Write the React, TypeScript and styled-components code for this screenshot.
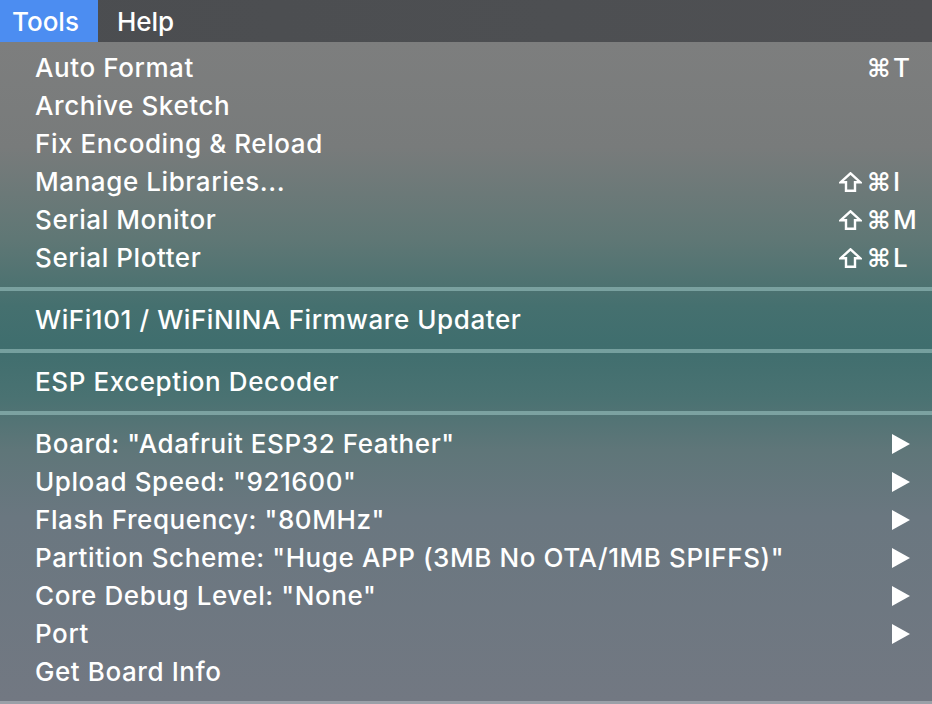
import React from "react";
import styled, { createGlobalStyle } from "styled-components";

const Global = createGlobalStyle`
  html, body { margin: 0; padding: 0; background: #6f7780; }
  body { width: 932px; height: 704px; overflow: hidden; font-family: Inter, "Noto Sans", "DejaVu Sans", sans-serif; }
  * { box-sizing: border-box; }
`;

const Screen = styled.div`
  width: 932px;
  height: 704px;
  display: flex;
  flex-direction: column;
  color: #fff;
`;

const MenuBar = styled.div`
  height: 42px;
  display: flex;
  align-items: stretch;
  background: linear-gradient(90deg, #4b4d50 0%, #4d4f52 60%, #4f5053 100%);
  font-size: 26px;
  font-weight: 500;
  letter-spacing: 0;
`;

const BarItem = styled.div<{ $active?: boolean }>`
  display: flex;
  align-items: center;
  padding: 0 19px;
  background: ${(p) => (p.$active ? "#4c8df1" : "transparent")};
  &:first-child {
    padding-left: 12px;
  }
`;

const Menu = styled.div`
  flex: 1;
  display: flex;
  flex-direction: column;
  padding: 7px 0 10px;
  background: linear-gradient(
    180deg,
    #7d7e7e 0%,
    #787b7b 16%,
    #5f7775 30%,
    #45706f 40%,
    #3f6e6e 46%,
    #4a7272 54%,
    #5f7679 62%,
    #6a7780 72%,
    #727882 100%
  );
  border-bottom: 3px solid #9aa0a8;
`;

const Row = styled.div`
  height: 38px;
  display: flex;
  align-items: center;
  padding: 0 13px 0 35px;
  font-size: 26px;
  font-weight: 500;
  letter-spacing: 0.58px;
  line-height: 36px;
`;

const Label = styled.span`
  flex: 1;
  white-space: nowrap;
`;

const Shortcut = styled.span`
  display: grid;
  grid-template-columns: 80px 26px;
  align-items: center;
`;

const Mods = styled.span`
  display: flex;
  justify-content: flex-end;
  align-items: center;
  gap: 5px;
  padding-right: 2px;
`;

const Cmd = styled.span`
  font-family: "DejaVu Sans", sans-serif;
  font-size: 25px;
  font-weight: 700;
  line-height: 1;
`;

const ShiftIcon = styled.svg`
  width: 23px;
  height: 20px;
`;

const Key = styled.span`
  text-align: left;
`;

const Separator = styled.div`
  height: 24px;
  display: flex;
  align-items: center;
  &::after {
    content: "";
    flex: 1;
    height: 4px;
    background: rgba(160, 200, 198, 0.55);
  }
`;

const Arrow = styled.svg`
  width: 18px;
  height: 20px;
  margin-right: 9px;
`;

type Item =
  | { type: "sep" }
  | { type: "item"; label: string; shift?: boolean; key?: string; sub?: boolean };

const items: Item[] = [
  { type: "item", label: "Auto Format", key: "T" },
  { type: "item", label: "Archive Sketch" },
  { type: "item", label: "Fix Encoding & Reload" },
  { type: "item", label: "Manage Libraries...", shift: true, key: "I" },
  { type: "item", label: "Serial Monitor", shift: true, key: "M" },
  { type: "item", label: "Serial Plotter", shift: true, key: "L" },
  { type: "sep" },
  { type: "item", label: "WiFi101 / WiFiNINA Firmware Updater" },
  { type: "sep" },
  { type: "item", label: "ESP Exception Decoder" },
  { type: "sep" },
  { type: "item", label: 'Board: "Adafruit ESP32 Feather"', sub: true },
  { type: "item", label: 'Upload Speed: "921600"', sub: true },
  { type: "item", label: 'Flash Frequency: "80MHz"', sub: true },
  { type: "item", label: 'Partition Scheme: "Huge APP (3MB No OTA/1MB SPIFFS)"', sub: true },
  { type: "item", label: 'Core Debug Level: "None"', sub: true },
  { type: "item", label: "Port", sub: true },
  { type: "item", label: "Get Board Info" },
];

export default function App() {
  return (
    <Screen>
      <Global />
      <MenuBar>
        <BarItem $active>Tools</BarItem>
        <BarItem>Help</BarItem>
      </MenuBar>
      <Menu>
        {items.map((it, i) =>
          it.type === "sep" ? (
            <Separator key={i} />
          ) : (
            <Row key={i}>
              <Label>{it.label}</Label>
              {it.key && (
                <Shortcut>
                  <Mods>
                    {it.shift && (
                      <ShiftIcon viewBox="0 0 23 20">
                        <path
                          d="M1.8 10.2 L11.5 1.3 L21.2 10.2 L16 10.2 L16 18.8 L7 18.8 L7 10.2 Z"
                          fill="none"
                          stroke="#fff"
                          strokeWidth="2.4"
                          strokeLinejoin="miter"
                        />
                      </ShiftIcon>
                    )}
                    <Cmd>⌘</Cmd>
                  </Mods>
                  <Key>{it.key}</Key>
                </Shortcut>
              )}
              {it.sub && (
                <Arrow viewBox="0 0 18 20">
                  <path d="M0 0 L18 10 L0 20 Z" fill="#fff" />
                </Arrow>
              )}
            </Row>
          )
        )}
      </Menu>
    </Screen>
  );
}
